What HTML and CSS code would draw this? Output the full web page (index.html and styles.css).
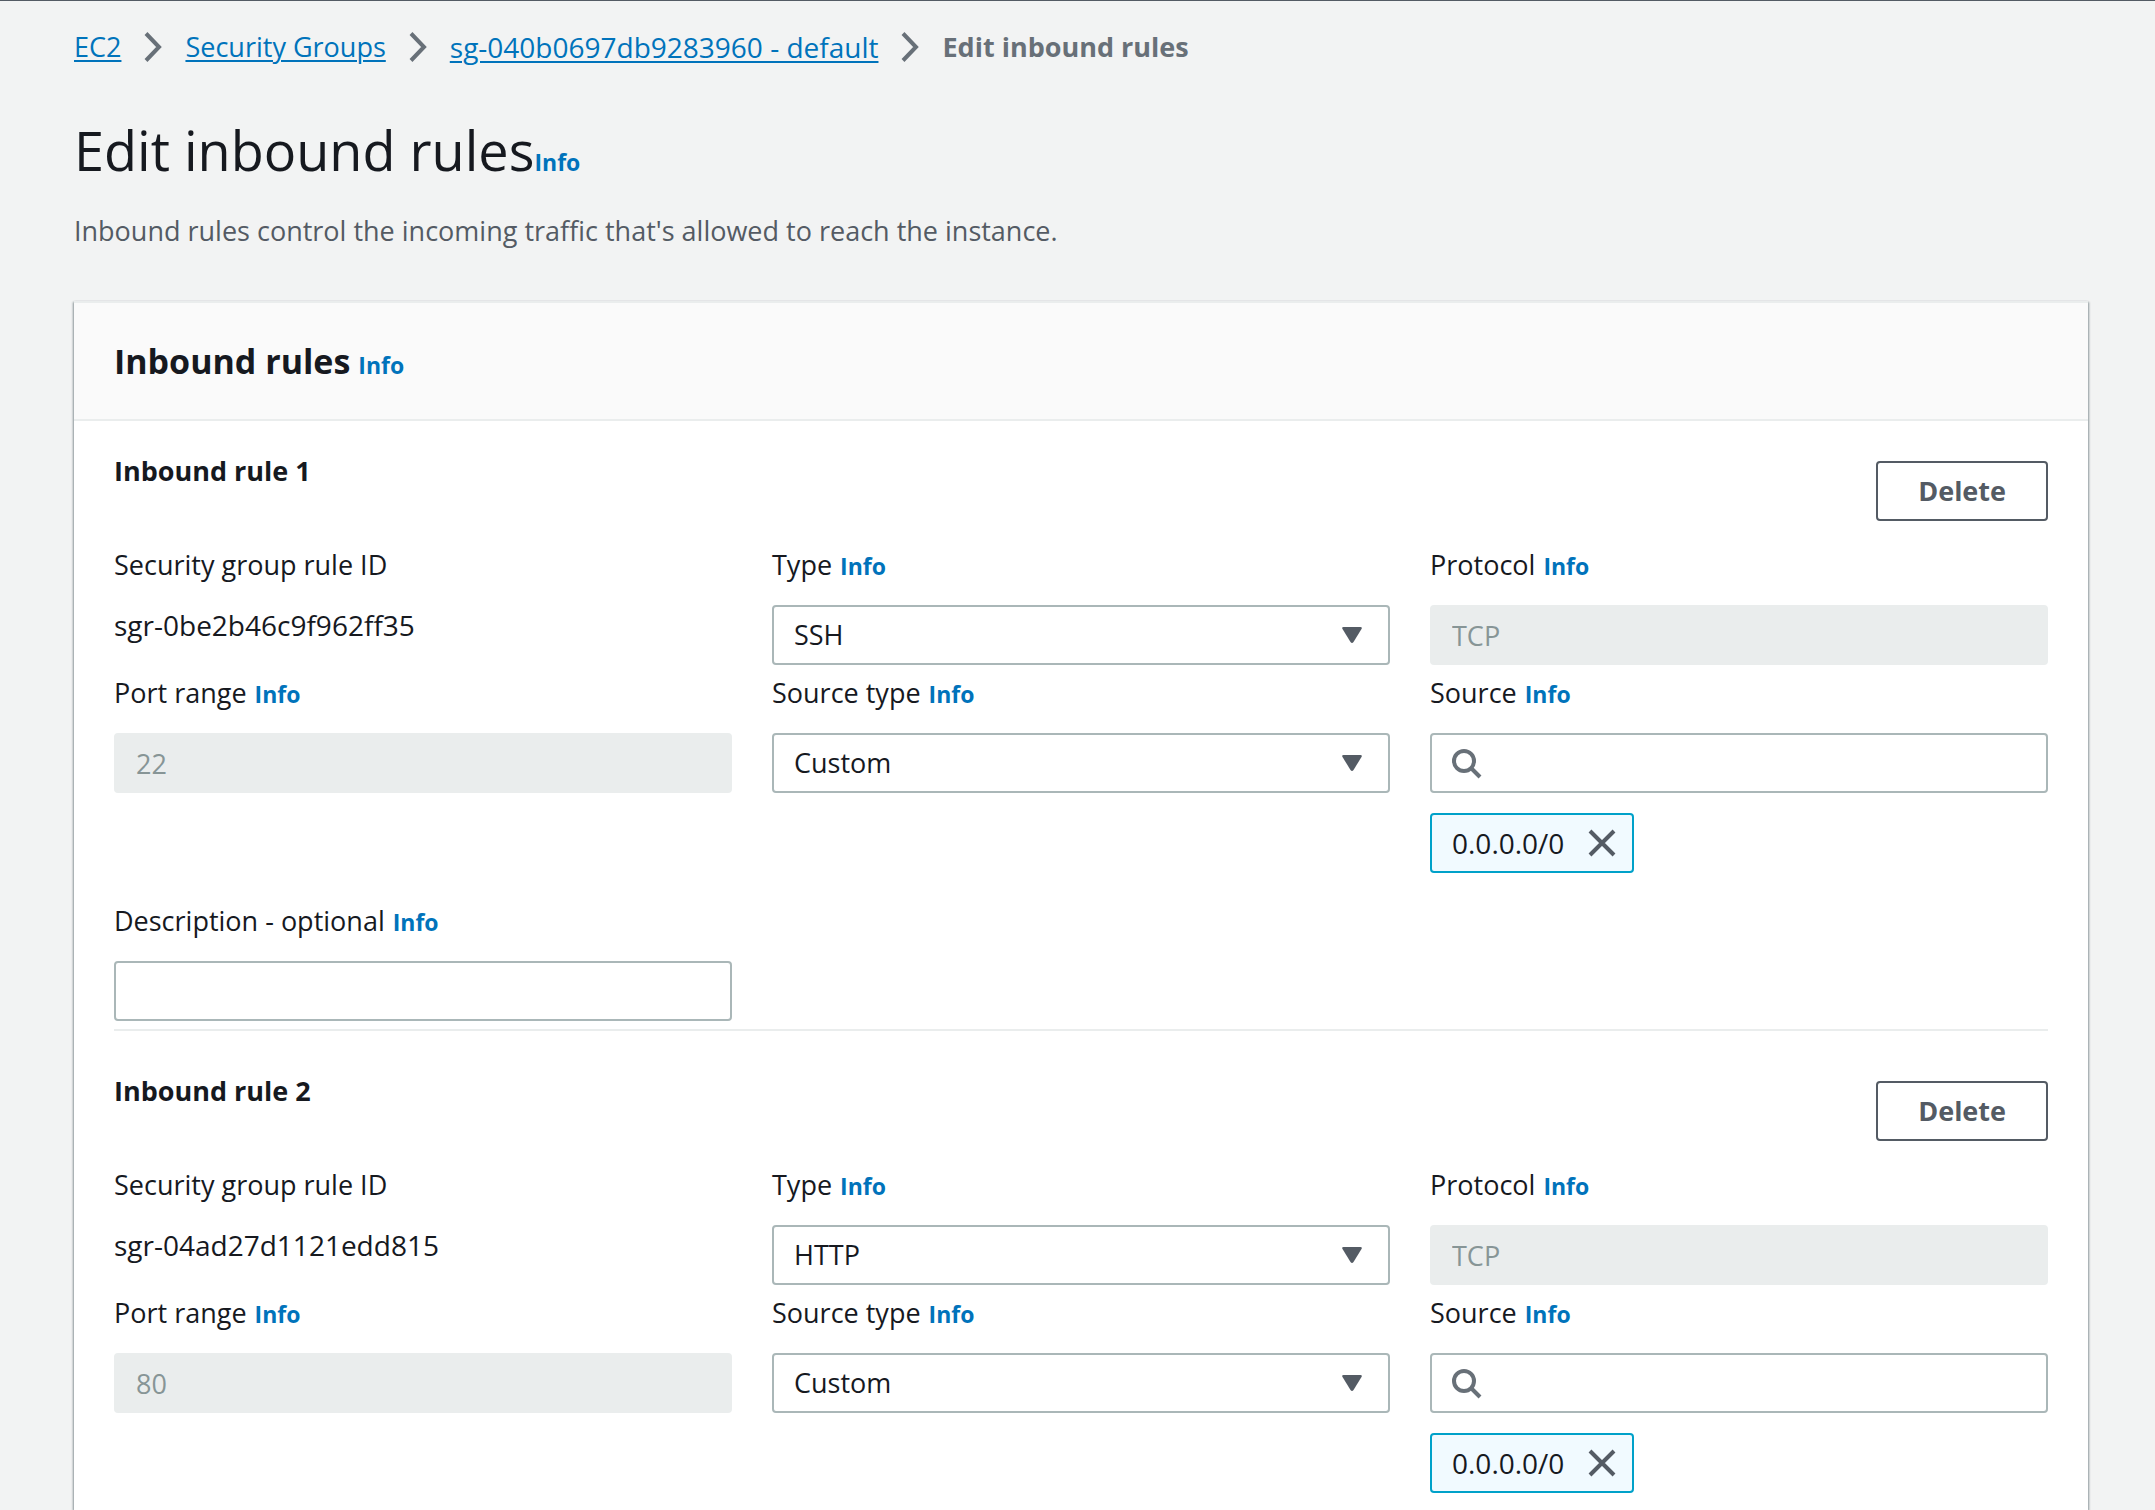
FILE: index.html
```html
<!DOCTYPE html>
<html lang="en">
<head>
<meta charset="utf-8">
<meta name="viewport" content="width=device-width, initial-scale=1">
<title>Edit inbound rules</title>
<link rel="stylesheet" href="styles.css">
</head>
<body>
<svg class="sprite" aria-hidden="true">
  <symbol id="chevron" viewBox="0 0 18 32"><path d="M2 2.500 15 16 2 29.500" fill="none" stroke="currentColor" stroke-width="4"/></symbol>
  <symbol id="caret" viewBox="0 0 20 17"><path d="M1.500 0h17q2 0 1 2l-8 13q-1.500 2-3 0L.500 2q-1-2 1-2z" fill="currentColor"/></symbol>
  <symbol id="search" viewBox="0 0 30 30"><circle cx="12" cy="12" r="10" fill="none" stroke="currentColor" stroke-width="4"/><path d="m19 19 9 9" fill="none" stroke="currentColor" stroke-width="4"/></symbol>
  <symbol id="close" viewBox="0 0 28 28"><path d="m2 2 24 24M26 2 2 26" fill="none" stroke="currentColor" stroke-width="4"/></symbol>
</svg>

<nav class="breadcrumb" aria-label="Breadcrumb">
  <a href="#ec2">EC2</a>
  <svg class="chevron"><use href="#chevron"/></svg>
  <a href="#groups">Security Groups</a>
  <svg class="chevron"><use href="#chevron"/></svg>
  <a class="identifier" href="#group">sg-040b0697db9283960 - default</a>
  <svg class="chevron"><use href="#chevron"/></svg>
  <span class="current">Edit inbound rules</span>
</nav>

<header class="page-header">
  <div class="page-title"><h1>Edit inbound rules</h1><a class="info" href="#info">Info</a></div>
  <p>Inbound rules control the incoming traffic that's allowed to reach the instance.</p>
</header>

<main class="card">
  <div class="card-header"><h2>Inbound rules</h2><a class="info" href="#info">Info</a></div>

  <section class="rule">
    <div class="rule-header"><h3>Inbound rule 1</h3><button class="delete" type="button">Delete</button></div>
    <div class="fields">
      <div class="field">
        <div class="label">Security group rule ID</div>
        <div class="identifier">sgr-0be2b46c9f962ff35</div>
      </div>
      <div class="field">
        <div class="label"><label for="type-1">Type</label><a class="info" href="#info">Info</a></div>
        <div class="control"><select id="type-1"><option>SSH</option></select><svg class="caret"><use href="#caret"/></svg></div>
      </div>
      <div class="field">
        <div class="label"><label for="protocol-1">Protocol</label><a class="info" href="#info">Info</a></div>
        <input id="protocol-1" type="text" value="TCP" disabled>
      </div>
      <div class="field">
        <div class="label"><label for="port-1">Port range</label><a class="info" href="#info">Info</a></div>
        <input id="port-1" type="text" value="22" disabled>
      </div>
      <div class="field">
        <div class="label"><label for="source-type-1">Source type</label><a class="info" href="#info">Info</a></div>
        <div class="control"><select id="source-type-1"><option>Custom</option></select><svg class="caret"><use href="#caret"/></svg></div>
      </div>
      <div class="field">
        <div class="label"><label for="source-1">Source</label><a class="info" href="#info">Info</a></div>
        <div class="control"><input class="search" id="source-1" type="text"><svg class="search-icon"><use href="#search"/></svg></div>
        <div class="token identifier">0.0.0.0/0<button class="dismiss" type="button" aria-label="Remove"><svg><use href="#close"/></svg></button></div>
      </div>
      <div class="field field-spaced">
        <div class="label"><label for="description-1">Description - optional</label><a class="info" href="#info">Info</a></div>
        <input id="description-1" type="text">
      </div>
    </div>
  </section>

  <section class="rule">
    <div class="rule-header"><h3>Inbound rule 2</h3><button class="delete" type="button">Delete</button></div>
    <div class="fields">
      <div class="field">
        <div class="label">Security group rule ID</div>
        <div class="identifier">sgr-04ad27d1121edd815</div>
      </div>
      <div class="field">
        <div class="label"><label for="type-2">Type</label><a class="info" href="#info">Info</a></div>
        <div class="control"><select id="type-2"><option>HTTP</option></select><svg class="caret"><use href="#caret"/></svg></div>
      </div>
      <div class="field">
        <div class="label"><label for="protocol-2">Protocol</label><a class="info" href="#info">Info</a></div>
        <input id="protocol-2" type="text" value="TCP" disabled>
      </div>
      <div class="field">
        <div class="label"><label for="port-2">Port range</label><a class="info" href="#info">Info</a></div>
        <input id="port-2" type="text" value="80" disabled>
      </div>
      <div class="field">
        <div class="label"><label for="source-type-2">Source type</label><a class="info" href="#info">Info</a></div>
        <div class="control"><select id="source-type-2"><option>Custom</option></select><svg class="caret"><use href="#caret"/></svg></div>
      </div>
      <div class="field">
        <div class="label"><label for="source-2">Source</label><a class="info" href="#info">Info</a></div>
        <div class="control"><input class="search" id="source-2" type="text"><svg class="search-icon"><use href="#search"/></svg></div>
        <div class="token identifier">0.0.0.0/0<button class="dismiss" type="button" aria-label="Remove"><svg><use href="#close"/></svg></button></div>
      </div>
    </div>
  </section>
</main>
</body>
</html>
```
FILE: styles.css
```css
* {
  box-sizing: border-box;
}

body {
  display: flex;
  flex-direction: column;
  min-height: 100vh;
  margin: 0;
  padding: 0 67px 0 74px;
  border-top: 1px solid #545b64;
  background: #f2f3f3;
  color: #16191f;
  font: 500 27px/40px "Open Sans", "Noto Sans", sans-serif;
}

h1, h2, h3, p {
  margin: 0;
}

a {
  color: #0073bb;
}

input, select, button {
  margin: 0;
  font: inherit;
}

.sprite {
  position: absolute;
  width: 0;
  height: 0;
}

.breadcrumb {
  display: flex;
  align-items: center;
  gap: 23px;
  padding-top: 26px;
  color: #687078;
}

.breadcrumb a {
  text-decoration-thickness: 2px;
  text-underline-offset: 3px;
}

.chevron {
  width: 18px;
  height: 32px;
}

.current {
  font-weight: 700;
}

.identifier {
  font-size: 28px;
}

.info {
  font-size: 23px;
  font-weight: 700;
  text-decoration: none;
}

.page-header {
  padding: 45px 0 50px;
  color: #545b64;
}

.page-title {
  display: flex;
  align-items: baseline;
  margin-bottom: 23px;
}

h1 {
  color: #16191f;
  font-size: 54px;
  font-weight: 500;
  line-height: 76px;
}

.card {
  flex: 1;
  border-top: 2px solid #eaeded;
  background: #fff;
  box-shadow: 1px 1px 2px rgba(0, 28, 36, 0.4), -1px 1px 2px rgba(0, 28, 36, 0.4);
}

.card-header {
  display: flex;
  align-items: baseline;
  gap: 8px;
  padding: 34px 40px;
  border-bottom: 2px solid #eaeded;
  background: #fafafa;
}

h2 {
  font-size: 34px;
  line-height: 48px;
}

.rule {
  margin: 0 40px;
  padding-top: 40px;
}

.rule:not(:last-child) {
  margin-bottom: 10px;
  padding-bottom: 8px;
  border-bottom: 2px solid #eaeded;
}

.rule-header {
  display: flex;
  justify-content: space-between;
  align-items: flex-start;
  margin-bottom: 24px;
}

h3 {
  font-size: 27px;
  line-height: 20px;
}

.delete {
  height: 60px;
  padding: 0 40px;
  border: 2px solid #545b64;
  border-radius: 4px;
  background: #fff;
  color: #545b64;
  font-weight: 700;
}

.fields {
  display: grid;
  grid-template-columns: repeat(3, 1fr);
  gap: 8px 40px;
}

.field-spaced {
  margin-top: 20px;
}

.label {
  display: flex;
  align-items: baseline;
  gap: 8px;
  height: 40px;
  margin-bottom: 20px;
}

.control {
  position: relative;
}

input, select {
  display: block;
  width: 100%;
  height: 60px;
  padding: 0 20px;
  border: 2px solid #aab7b8;
  border-radius: 4px;
  background: #fff;
  color: #16191f;
  appearance: none;
}

input:disabled {
  border-color: #eaeded;
  background: #eaeded;
  color: #879596;
}

.search {
  padding-left: 64px;
}

.caret {
  position: absolute;
  top: 22px;
  right: 28px;
  width: 20px;
  height: 17px;
  color: #545b64;
  pointer-events: none;
}

.search-icon {
  position: absolute;
  top: 16px;
  left: 22px;
  width: 30px;
  height: 30px;
  color: #687078;
  pointer-events: none;
}

.token {
  display: flex;
  align-items: center;
  gap: 24px;
  width: fit-content;
  height: 60px;
  margin-top: 20px;
  padding: 0 16px 0 20px;
  border: 2px solid #00a1c9;
  border-radius: 4px;
  background: #f1faff;
}

.dismiss {
  display: flex;
  padding: 0;
  border: 0;
  background: none;
  color: #545b64;
}

.dismiss svg {
  width: 28px;
  height: 28px;
}
```
